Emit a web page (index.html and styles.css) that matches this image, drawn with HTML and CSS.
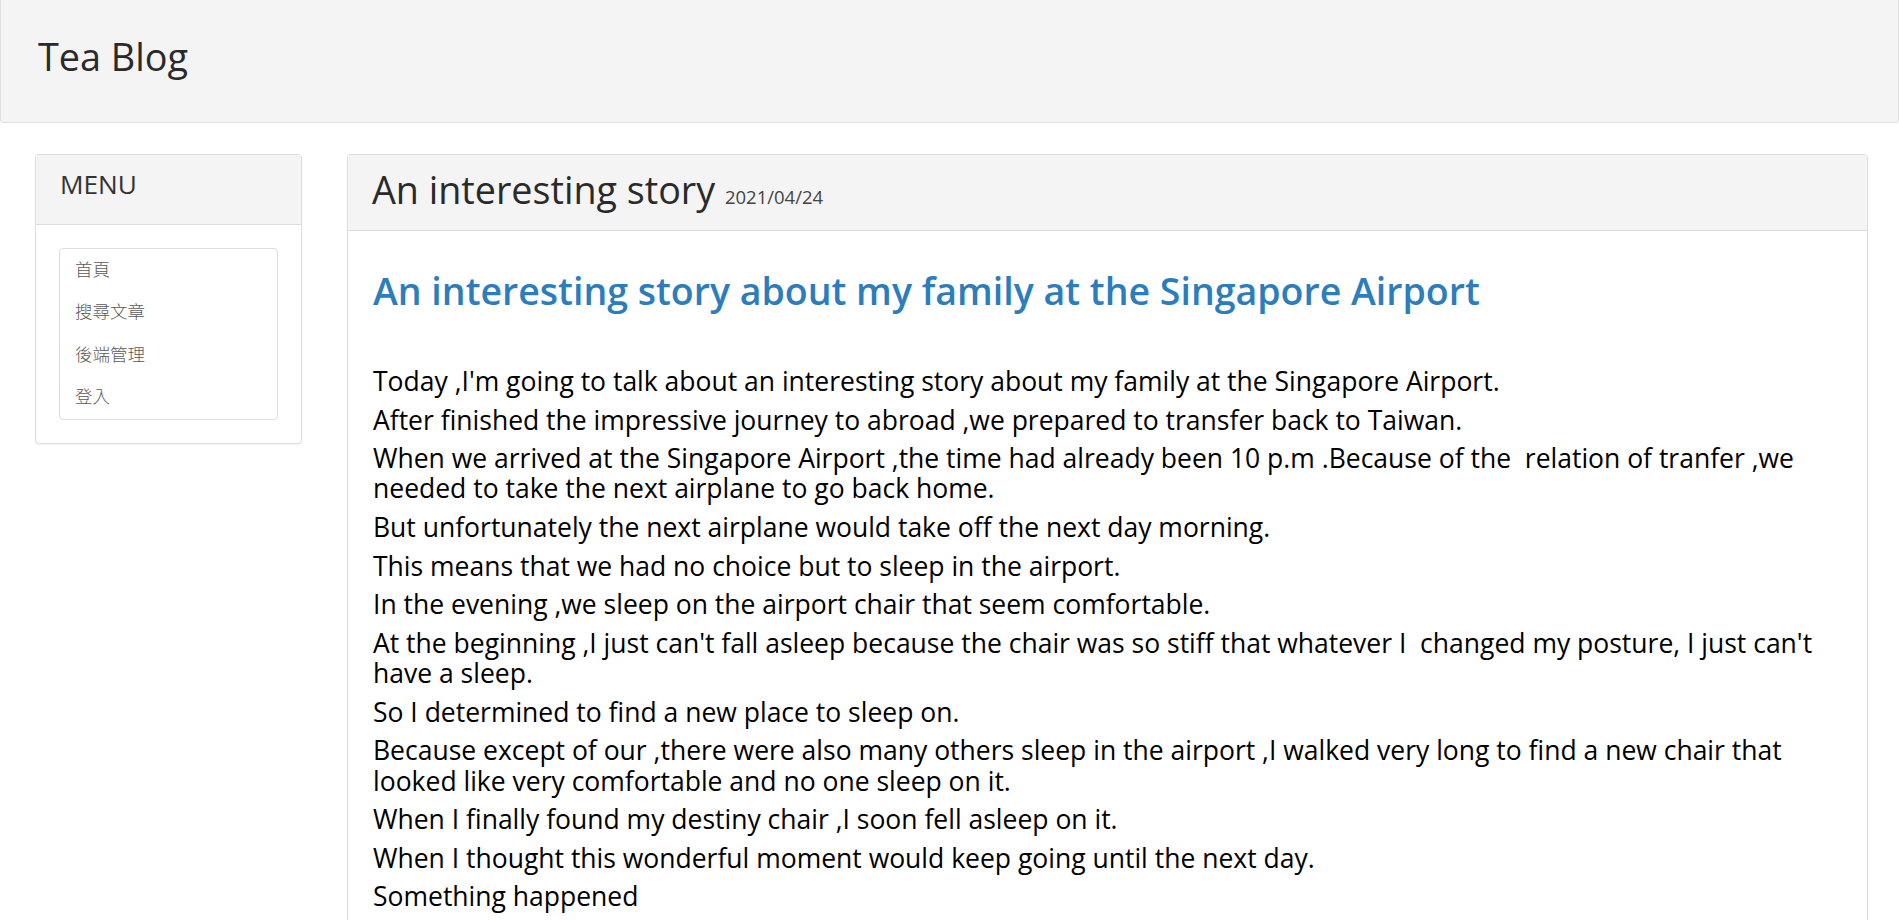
FILE: index.html
```
<!DOCTYPE html>
<html lang="zh-Hant">
<head>
<meta charset="utf-8">
<title>Tea Blog</title>
<link rel="stylesheet" href="styles.css">
</head>
<body>
<header class="navbar">
  <a class="brand" href="#">Tea Blog</a>
</header>
<div class="layout">
  <aside class="sidebar">
    <div class="panel">
      <div class="panel-heading menu-heading">MENU</div>
      <div class="panel-body menu-body">
        <ul class="list-group">
          <li class="list-item">首頁</li>
          <li class="list-item">搜尋文章</li>
          <li class="list-item">後端管理</li>
          <li class="list-item">登入</li>
        </ul>
      </div>
    </div>
  </aside>
  <main class="content">
    <article class="panel post">
      <div class="panel-heading post-heading">An interesting story <small class="date">2021/04/24</small></div>
      <div class="panel-body post-body">
        <h2 class="post-title">An interesting story about my family at the Singapore Airport</h2>
        <p>Today ,I'm going to talk about an interesting story about my family at the Singapore Airport.</p>
        <p>After finished the impressive journey to abroad ,we prepared to transfer back to Taiwan.</p>
        <p>When we arrived at the Singapore Airport ,the time had already been 10 p.m .Because of the &nbsp;relation of tranfer ,we needed to take the next airplane to go back home.</p>
        <p>But unfortunately the next airplane would take off the next day morning.</p>
        <p>This means that we had no choice but to sleep in the airport.</p>
        <p>In the evening ,we sleep on the airport chair that seem comfortable.</p>
        <p>At the beginning ,I just can't fall asleep because the chair was so stiff that whatever I &nbsp;changed my posture, I just can't have a sleep.</p>
        <p>So I determined to find a new place to sleep on.</p>
        <p>Because except of our ,there were also many others sleep in the airport ,I walked very long to find a new chair that looked like very comfortable and no one sleep on it.</p>
        <p>When I finally found my destiny chair ,I soon fell asleep on it.</p>
        <p>When I thought this wonderful moment would keep going until the next day.</p>
        <p>Something happened</p>
      </div>
    </article>
  </main>
</div>
</body>
</html>
```
FILE: styles.css
```
html, body {
  margin: 0;
  padding: 0;
  height: 100%;
  overflow: hidden;
  background: #fff;
}
body {
  font-family: "Open Sans", "Noto Sans CJK TC", sans-serif;
  color: #000;
}
.navbar {
  background: #f4f4f4;
  border: 1px solid #e0e0e0;
  border-top: 0;
  border-radius: 0 0 4px 4px;
  height: 122px;
  box-sizing: content-box;
  padding: 0 0 0 37px;
}
.brand {
  display: block;
  padding-top: 35px;
  font-size: 37.8px;
  line-height: 44px;
  color: #2a2a2a;
  text-decoration: none;
}
.layout {
  display: flex;
  align-items: flex-start;
  gap: 45px;
  padding: 31px 31px 0 35px;
}
.sidebar {
  width: 267px;
  flex: none;
}
.content {
  flex: 1;
  min-width: 0;
}
.panel {
  background: #fff;
  border: 1px solid #ddd;
  border-radius: 4px;
  box-shadow: 0 1px 2px rgba(0, 0, 0, 0.06);
}
.panel-heading {
  background: #f4f4f4;
  border-bottom: 1px solid #ddd;
  border-radius: 3px 3px 0 0;
  color: #333;
}
.menu-heading {
  font-size: 26.2px;
  line-height: 30px;
  padding: 14px 24px 25px;
}
.menu-body {
  padding: 23px;
}
.list-group {
  list-style: none;
  margin: 0;
  padding: 0;
  border: 1px solid #ddd;
  border-radius: 4px;
}
.list-item {
  font-family: "Noto Sans CJK TC", "Open Sans", sans-serif;
  font-size: 17.5px;
  line-height: 22.4px;
  padding: 9px 15px 11px;
  color: #5a5a5a;
  font-weight: 300;
}
.post-heading {
  font-size: 37.7px;
  line-height: 44px;
  padding: 13px 24px 18px;
  color: #2a2a2a;
}
.date {
  font-size: 18.5px;
  line-height: 1;
  color: #444;
}
.post-body {
  padding: 39px 25px 60px;
}
.post-title {
  margin: 0 0 55px;
  font-size: 37.5px;
  line-height: 41px;
  font-weight: 600;
  color: #2c7dbc;
}
.post-body p {
  margin: 0 0 8.3px;
  font-size: 26.5px;
  line-height: 30.3px;
  color: #000;
}
```
